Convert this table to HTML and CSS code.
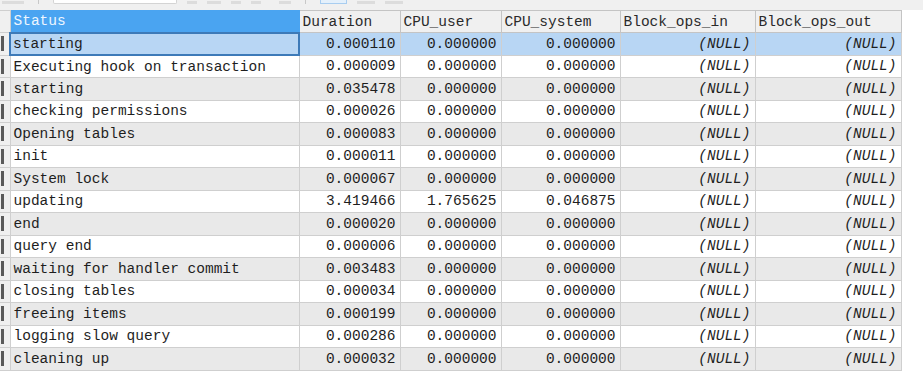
FILE: index.html
```html
<!DOCTYPE html>
<html lang="en">
<head>
<meta charset="UTF-8">
<title>Profile</title>
<link rel="stylesheet" href="styles.css">
</head>
<body>
  <div class="toolbar">
    <span class="tb tb-a"></span>
    <span class="tb-sep"></span>
    <span class="tb-input"></span>
    <span class="tb tb-b"></span>
    <span class="tb tb-c"></span>
    <span class="tb tb-d"></span>
    <span class="tb tb-e"></span>
    <span class="tb tb-f"></span>
    <span class="tb-sep"></span>
    <span class="tb-on"></span>
    <span class="tb tb-g"></span>
    <span class="tb tb-h"></span>
  </div>

  <table class="grid">
    <colgroup>
      <col class="c-ind"><col class="c-status"><col class="c-dur"><col class="c-user">
      <col class="c-sys"><col class="c-in"><col class="c-out">
    </colgroup>
    <thead>
      <tr>
        <th class="ind"></th>
        <th class="sorted">Status</th>
        <th>Duration</th>
        <th>CPU_user</th>
        <th>CPU_system</th>
        <th>Block_ops_in</th>
        <th>Block_ops_out</th>
      </tr>
    </thead>
    <tbody>
      <tr class="sel"><td class="ind"><i></i></td><td class="focus">starting</td><td class="num">0.000110</td><td class="num">0.000000</td><td class="num">0.000000</td><td class="null">(NULL)</td><td class="null">(NULL)</td></tr>
      <tr><td class="ind"><i></i></td><td>Executing hook on transaction</td><td class="num">0.000009</td><td class="num">0.000000</td><td class="num">0.000000</td><td class="null">(NULL)</td><td class="null">(NULL)</td></tr>
      <tr><td class="ind"><i></i></td><td>starting</td><td class="num">0.035478</td><td class="num">0.000000</td><td class="num">0.000000</td><td class="null">(NULL)</td><td class="null">(NULL)</td></tr>
      <tr><td class="ind"><i></i></td><td>checking permissions</td><td class="num">0.000026</td><td class="num">0.000000</td><td class="num">0.000000</td><td class="null">(NULL)</td><td class="null">(NULL)</td></tr>
      <tr><td class="ind"><i></i></td><td>Opening tables</td><td class="num">0.000083</td><td class="num">0.000000</td><td class="num">0.000000</td><td class="null">(NULL)</td><td class="null">(NULL)</td></tr>
      <tr><td class="ind"><i></i></td><td>init</td><td class="num">0.000011</td><td class="num">0.000000</td><td class="num">0.000000</td><td class="null">(NULL)</td><td class="null">(NULL)</td></tr>
      <tr><td class="ind"><i></i></td><td>System lock</td><td class="num">0.000067</td><td class="num">0.000000</td><td class="num">0.000000</td><td class="null">(NULL)</td><td class="null">(NULL)</td></tr>
      <tr><td class="ind"><i></i></td><td>updating</td><td class="num">3.419466</td><td class="num">1.765625</td><td class="num">0.046875</td><td class="null">(NULL)</td><td class="null">(NULL)</td></tr>
      <tr><td class="ind"><i></i></td><td>end</td><td class="num">0.000020</td><td class="num">0.000000</td><td class="num">0.000000</td><td class="null">(NULL)</td><td class="null">(NULL)</td></tr>
      <tr><td class="ind"><i></i></td><td>query end</td><td class="num">0.000006</td><td class="num">0.000000</td><td class="num">0.000000</td><td class="null">(NULL)</td><td class="null">(NULL)</td></tr>
      <tr><td class="ind"><i></i></td><td>waiting for handler commit</td><td class="num">0.003483</td><td class="num">0.000000</td><td class="num">0.000000</td><td class="null">(NULL)</td><td class="null">(NULL)</td></tr>
      <tr><td class="ind"><i></i></td><td>closing tables</td><td class="num">0.000034</td><td class="num">0.000000</td><td class="num">0.000000</td><td class="null">(NULL)</td><td class="null">(NULL)</td></tr>
      <tr><td class="ind"><i></i></td><td>freeing items</td><td class="num">0.000199</td><td class="num">0.000000</td><td class="num">0.000000</td><td class="null">(NULL)</td><td class="null">(NULL)</td></tr>
      <tr><td class="ind"><i></i></td><td>logging slow query</td><td class="num">0.000286</td><td class="num">0.000000</td><td class="num">0.000000</td><td class="null">(NULL)</td><td class="null">(NULL)</td></tr>
      <tr><td class="ind"><i></i></td><td>cleaning up</td><td class="num">0.000032</td><td class="num">0.000000</td><td class="num">0.000000</td><td class="null">(NULL)</td><td class="null">(NULL)</td></tr>
    </tbody>
  </table>
</body>
</html>
```

FILE: styles.css
```css
/** Commun */
* { margin: 0; padding: 0; box-sizing: border-box; }

body {
  background: #ffffff;
  font-family: "Liberation Mono", "Courier New", monospace;
  font-size: 14.5px;
  color: #1e1e1e;
  overflow: hidden;
}

/** Barre d'outils (coupee en haut) */
.toolbar {
  height: 10px;
  background: #f0f0f0;
  display: flex;
  align-items: flex-end;
  gap: 10px;
  padding-bottom: 6px;
}
.tb { height: 3px; background: #dcdcdc; }
.tb-a { width: 22px; margin-left: 2px; }
.tb-b { width: 10px; }
.tb-c { width: 14px; }
.tb-d { width: 10px; }
.tb-e { width: 10px; }
.tb-f { width: 12px; margin-left: 8px; }
.tb-g { width: 18px; }
.tb-h { width: 18px; }
.tb-sep { width: 1px; height: 4px; background: #c8c8c8; margin: 0 4px; }
.tb-input {
  width: 124px; height: 4px;
  border: 1px solid #d4d4d4; border-top: none;
  background: #fff;
  border-radius: 0 0 2px 2px;
}
.tb-on {
  width: 27px; height: 4px;
  border: 1px solid #a8cdf0; border-top: none;
  background: #e4f0fb;
}

/** Grille */
.grid {
  table-layout: fixed;
  border-collapse: collapse;
  width: 901px;
}
.c-ind { width: 10px; }
.c-status { width: 289px; }
.c-dur { width: 101px; }
.c-user { width: 101px; }
.c-sys { width: 119px; }
.c-in { width: 135px; }
.c-out { width: 146px; }

th, td {
  border: 1px solid #cfcfcf;
  height: 22.5px;
  padding: 0 3px;
  white-space: nowrap;
  overflow: hidden;
  text-align: left;
  font-weight: normal;
  line-height: 20px;
}
th {
  height: 22px;
  background: #f0f0f0;
  color: #2a2a2a;
  border-color: #c4c4c4;
}
th.sorted {
  background: #4aa4f1;
  color: #eef6ff;
  border-color: #4aa4f1;
}

tbody tr { background: #ffffff; }
tbody tr:nth-child(odd) { background: #e9e9e9; }
tbody tr.sel { background: #b8d6f4; }

td.focus {
  border: 2px solid #3d7ab8;
  padding-left: 2px;
}
.num { text-align: right; padding-right: 4px; }
.null { text-align: right; font-style: italic; padding-right: 4px; }

/** Indicateur de ligne */
.ind {
  padding: 0;
  background: #f0f0f0;
  border-left: none;
  border-color: #cfcfcf;
}
tbody tr .ind { background: #f0f0f0; }
.ind i {
  display: block;
  width: 3px;
  height: 15px;
  margin-left: 1px;
  background: #5a5a5a;
}
```
